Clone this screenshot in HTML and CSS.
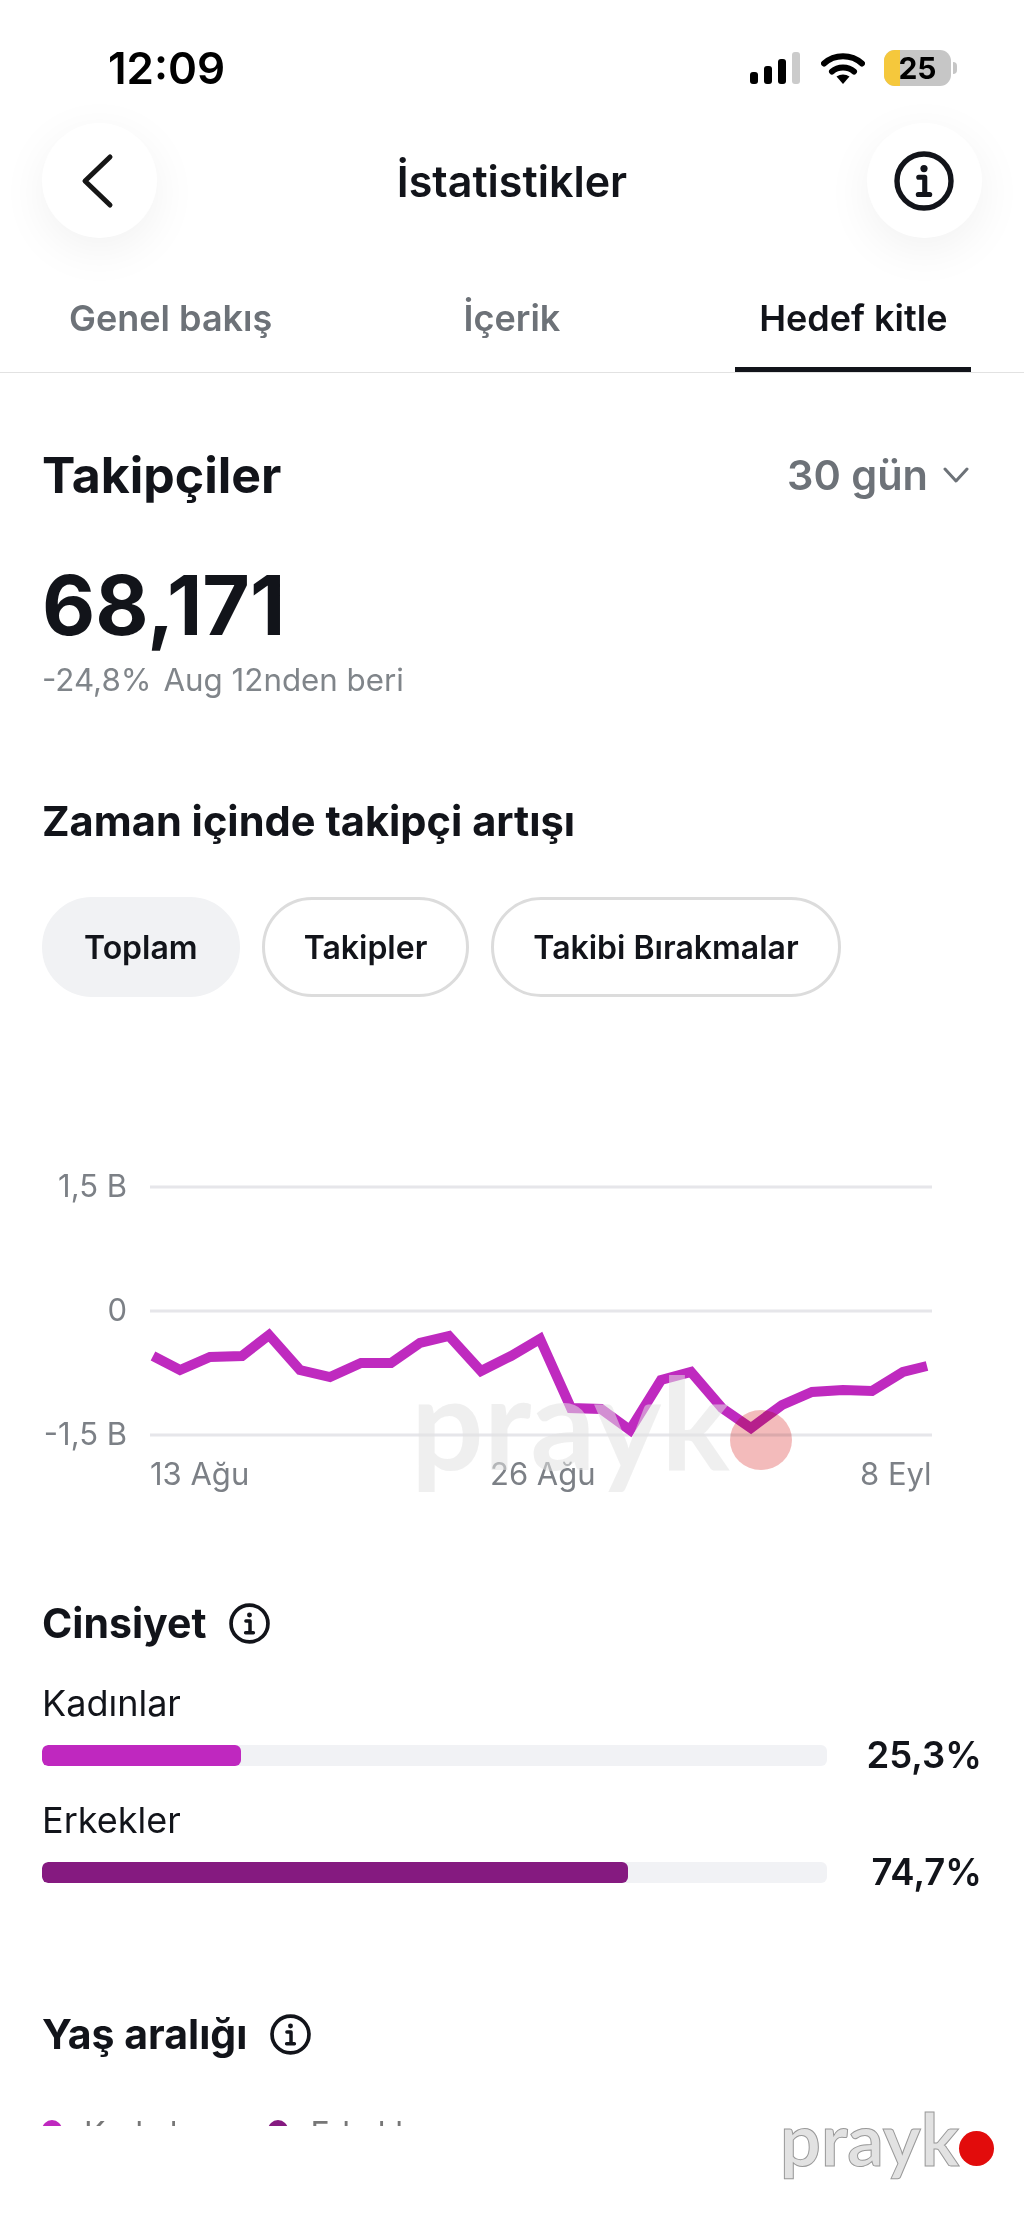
FILE: index.html
```html
<!DOCTYPE html>
<html lang="tr">
<head>
    <meta charset="UTF-8">
    <meta name="viewport" content="width=device-width, initial-scale=1.0">
    <title>İstatistikler</title>
    <link rel="stylesheet" href="styles.css">
</head>
<body>

    <svg class="defs" width="0" height="0">
        <symbol id="icon-info" viewBox="0 0 40 40">
            <circle cx="20" cy="20" r="18" fill="none" stroke="currentColor" stroke-width="3.6"/>
            <circle cx="20" cy="11.7" r="2.4" fill="currentColor"/>
            <path d="M16.5 17.5h4v11.5M16.2 29h7.6" fill="none" stroke="currentColor" stroke-width="3.4" stroke-linecap="round" stroke-linejoin="round"/>
        </symbol>
    </svg>

    <div class="page">
        <div class="status-bar">
            <span class="time">12:09</span>
            <div class="status-icons">
                <svg class="signal" width="50" height="32" viewBox="0 0 50 32">
                    <rect x="0" y="20" width="8" height="12" rx="3" fill="#000"/>
                    <rect x="14" y="14" width="8" height="18" rx="3" fill="#000"/>
                    <rect x="28" y="7" width="8" height="25" rx="3" fill="#000"/>
                    <rect x="42" y="0" width="8" height="32" rx="3" fill="#cbcbcb"/>
                </svg>
                <svg class="wifi" width="44" height="32" viewBox="0 0 44 32">
                    <path d="M3 11.5C13.5 1.8 30.5 1.8 41 11.5" fill="none" stroke="#000" stroke-width="6" stroke-linecap="round"/>
                    <path d="M11 19.5C17 14.2 27 14.2 33 19.5" fill="none" stroke="#000" stroke-width="6" stroke-linecap="round"/>
                    <path d="M15.5 24.5C19.5 21.8 24.5 21.8 28.5 24.5L22 32Z" fill="#000"/>
                </svg>
                <div class="battery">
                    <div class="battery-body">
                        <div class="battery-level"></div>
                        <span class="battery-text">25</span>
                    </div>
                    <div class="battery-nub"></div>
                </div>
            </div>
        </div>

        <div class="nav">
            <button class="round-btn">
                <svg width="36" height="56" viewBox="0 0 36 56">
                    <path d="M31 4L6 28L31 52" fill="none" stroke="#161616" stroke-width="5" stroke-linecap="round" stroke-linejoin="round"/>
                </svg>
            </button>
            <div class="nav-title">İstatistikler</div>
            <button class="round-btn">
                <svg class="info-lg"><use href="#icon-info"/></svg>
            </button>
        </div>

        <div class="tabs">
            <div class="tab"><span class="tab-label">Genel bakış</span></div>
            <div class="tab"><span class="tab-label">İçerik</span></div>
            <div class="tab active"><span class="tab-label">Hedef kitle</span></div>
        </div>

        <div class="content">
            <div class="followers-head">
                <h1 class="followers-title">Takipçiler</h1>
                <div class="range">
                    <span>30 gün</span>
                    <svg width="26" height="16" viewBox="0 0 26 16">
                        <path d="M2 2L13 14L24 2" fill="none" stroke="#6d7278" stroke-width="3" stroke-linecap="round" stroke-linejoin="round"/>
                    </svg>
                </div>
            </div>

            <div class="big-number">68,171</div>
            <div class="delta"><span>-24,8%</span><span>Aug 12nden beri</span></div>

            <h2 class="section-title growth-title">Zaman içinde takipçi artışı</h2>

            <div class="chips">
                <div class="chip selected">Toplam</div>
                <div class="chip">Takipler</div>
                <div class="chip">Takibi Bırakmalar</div>
            </div>

            <svg class="chart" width="1024" height="380" viewBox="0 1140 1024 380">
                <g class="grid">
                    <line x1="150" y1="1187" x2="932" y2="1187"/>
                    <line x1="150" y1="1311" x2="932" y2="1311"/>
                    <line x1="150" y1="1435" x2="932" y2="1435"/>
                </g>
                <g class="axis-y">
                    <text x="127" y="1197">1,5 B</text>
                    <text x="127" y="1321">0</text>
                    <text x="127" y="1445">-1,5 B</text>
                </g>
                <g class="axis-x">
                    <text x="150" y="1485">13 Ağu</text>
                    <text x="490" y="1485">26 Ağu</text>
                    <text x="860" y="1485">8 Eyl</text>
                </g>
                <polyline class="trend" points="153,1356 180,1370 210,1357 242,1356 269,1335 300,1370 330,1377 361,1363 391,1363 420,1343 449,1336 481,1371 511,1356 540,1339 571,1408 601,1409 630,1430 661,1380 691,1372 722,1408 751,1428 782,1405 812,1392 843,1390 872,1391 903,1372 927,1366"/>
            </svg>

            <div class="section-head gender-head">
                <h2 class="section-title">Cinsiyet</h2>
                <svg class="info-sm"><use href="#icon-info"/></svg>
            </div>

            <div class="gender-row">
                <div class="gender-label">Kadınlar</div>
                <div class="bar-line">
                    <div class="bar-track"><div class="bar-fill women" style="width: 25.3%"></div></div>
                    <div class="bar-value">25,3%</div>
                </div>
            </div>
            <div class="gender-row">
                <div class="gender-label">Erkekler</div>
                <div class="bar-line">
                    <div class="bar-track"><div class="bar-fill men" style="width: 74.7%"></div></div>
                    <div class="bar-value">74,7%</div>
                </div>
            </div>

            <div class="section-head age-head">
                <h2 class="section-title">Yaş aralığı</h2>
                <svg class="info-sm"><use href="#icon-info"/></svg>
            </div>

            <div class="legend">
                <div class="legend-item"><span class="dot women"></span>Kadınlar</div>
                <div class="legend-item"><span class="dot men"></span>Erkekler</div>
            </div>
        </div>

        <!-- watermark over the chart -->
        <div class="mark mark-chart"><span class="mark-text">prayk</span><span class="mark-dot"></span></div>
        <!-- logo bottom right -->
        <div class="mark mark-logo"><span class="mark-text">prayk</span><span class="mark-dot"></span></div>
    </div>

</body>
</html>
```

FILE: styles.css
```css
* {
    box-sizing: border-box;
}

body {
    margin: 0;
    background: #fff;
    color: #12141a;
    font-family: Inter, "Liberation Sans", sans-serif;
}

.defs {
    position: absolute;
}

.page {
    position: relative;
    width: 1024px;
    height: 2216px;
    overflow: hidden;
    background: #fff;
}

/* status bar */
.status-bar {
    display: flex;
    justify-content: space-between;
    align-items: center;
    height: 123px;
    padding: 13px 67px 0 108px;
}

.time {
    font-size: 44px;
    font-weight: 600;
    color: #000;
}

.status-icons {
    display: flex;
    align-items: center;
}

.signal {
    margin-right: 21px;
}

.wifi {
    margin-right: 19px;
}

.battery {
    display: flex;
    align-items: center;
    gap: 2px;
}

.battery-body {
    position: relative;
    width: 67px;
    height: 36px;
    border-radius: 11px;
    background: #c6c6c6;
    overflow: hidden;
    display: flex;
    align-items: center;
    justify-content: center;
}

.battery-level {
    position: absolute;
    left: 0;
    top: 0;
    bottom: 0;
    width: 16px;
    background: #f5c83c;
}

.battery-text {
    position: relative;
    font-size: 30px;
    font-weight: 700;
    color: #000;
}

.battery-nub {
    width: 4px;
    height: 12px;
    border-radius: 0 4px 4px 0;
    background: #c6c6c6;
}

/* nav */
.nav {
    display: flex;
    justify-content: space-between;
    align-items: center;
    height: 115px;
    padding: 0 42px;
}

.round-btn {
    display: flex;
    align-items: center;
    justify-content: center;
    width: 115px;
    height: 115px;
    padding: 0;
    border: none;
    border-radius: 50%;
    background: #fff;
    color: #12141a;
    box-shadow: 0 12px 48px rgba(0, 0, 0, 0.06);
}

.round-btn:first-child svg {
    margin-right: 5px;
}

.info-lg {
    width: 60px;
    height: 60px;
}

.nav-title {
    font-size: 43px;
    font-weight: 600;
}

/* tabs */
.tabs {
    display: grid;
    grid-template-columns: repeat(3, 1fr);
    height: 135px;
    border-bottom: 1px solid #e2e2e2;
}

.tab {
    display: flex;
    justify-content: center;
    align-items: flex-end;
    font-size: 36px;
    font-weight: 600;
    color: #6d7278;
}

.tab-label {
    min-width: 236px;
    padding-bottom: 27px;
    text-align: center;
    border-bottom: 5px solid transparent;
}

.tab.active {
    color: #12141a;
}

.tab.active .tab-label {
    border-bottom-color: #12141a;
}

/* content */
.content {
    padding: 0 42px;
}

.followers-head {
    display: flex;
    justify-content: space-between;
    align-items: center;
    margin-top: 72px;
}

.followers-title {
    margin: 0;
    font-size: 50px;
    font-weight: 700;
}

.range {
    display: flex;
    align-items: center;
    gap: 15px;
    font-size: 41.5px;
    font-weight: 600;
    color: #6d7278;
    padding-right: 13px;
}

.big-number {
    margin-top: 54px;
    font-size: 82px;
    font-weight: 700;
    line-height: 94px;
}

.delta {
    display: flex;
    gap: 12px;
    margin-top: 8px;
    font-size: 31.3px;
    color: #80858a;
}

.section-title {
    margin: 0;
    font-size: 41px;
    font-weight: 700;
}

.growth-title {
    margin-top: 97px;
    font-size: 41.6px;
}

.chips {
    display: flex;
    gap: 22px;
    margin-top: 51px;
}

.chip {
    display: flex;
    align-items: center;
    height: 100px;
    padding: 0 39px;
    border: 3px solid #dcdcdc;
    border-radius: 50px;
    font-size: 32px;
    font-weight: 600;
}

.chip.selected {
    padding: 0 39px;
    background: #f1f2f4;
    border-color: #f1f2f4;
}

/* chart */
.chart {
    display: block;
    margin: 143px 0 0 -42px;
}

.grid line {
    stroke: #e6e6ea;
    stroke-width: 3;
}

.axis-y text {
    font-size: 31px;
    fill: #7c8086;
    text-anchor: end;
}

.axis-x text {
    font-size: 31px;
    fill: #7c8086;
}

.trend {
    fill: none;
    stroke: #bf2abf;
    stroke-width: 10;
    stroke-linejoin: miter;
}

/* gender */
.section-head {
    display: flex;
    align-items: center;
    gap: 23px;
}

.gender-head {
    margin-top: 78px;
    margin-bottom: 33px;
}

.info-sm {
    width: 41px;
    height: 41px;
}

.gender-row {
    margin-top: 21px;
}

.gender-label {
    font-size: 36px;
}

.bar-line {
    display: flex;
    align-items: center;
    justify-content: space-between;
    margin-top: 8px;
}

.bar-track {
    width: 785px;
    height: 21px;
    border-radius: 6px;
    background: #f1f2f5;
    overflow: hidden;
}

.bar-fill {
    height: 100%;
    border-radius: 6px;
}

.bar-value {
    font-size: 36.5px;
    font-weight: 600;
}

.women {
    background: #bf28bf;
}

.men {
    background: #851a80;
}

.age-head {
    margin-top: 115px;
}

/* cut off where the scroll area ends */
.legend {
    display: flex;
    gap: 61px;
    margin-top: 61px;
    height: 6px;
    overflow: hidden;
    font-size: 32px;
    color: #777;
}

.legend-item {
    display: flex;
    gap: 22px;
    line-height: 28px;
}

.dot {
    width: 20px;
    height: 20px;
    border-radius: 50%;
}

/* watermarks */
.mark {
    position: absolute;
    display: flex;
    align-items: baseline;
    font-family: Lato, Inter, sans-serif;
    font-weight: 700;
}

.mark-chart {
    left: 411px;
    top: 1344px;
    font-size: 128px;
}

.mark-chart .mark-text {
    color: rgba(225, 225, 225, 0.55);
}

.mark-chart .mark-dot {
    width: 62px;
    height: 60px;
    margin-bottom: 3px;
    border-radius: 50%;
    background: rgba(222, 60, 60, 0.35);
    mix-blend-mode: multiply;
}

.mark-logo {
    left: 780px;
    top: 2095px;
    font-size: 72px;
}

.mark-logo .mark-text {
    color: #e2e2e2;
    -webkit-text-stroke: 1px #999;
}

.mark-logo .mark-dot {
    width: 35px;
    height: 35px;
    border-radius: 50%;
    background: #e20c0c;
}
```
